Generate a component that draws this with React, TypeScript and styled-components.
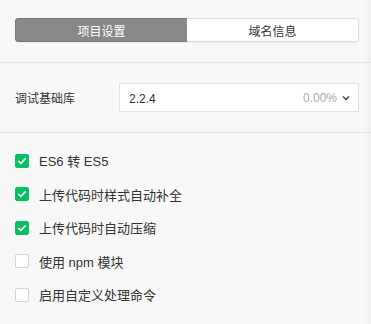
import React, { useState } from "react";
import styled, { createGlobalStyle } from "styled-components";

const Global = createGlobalStyle`
  html, body { margin: 0; padding: 0; background: #f8f8f8; }
  body { font-family: "Liberation Sans", "Noto Sans CJK SC", sans-serif; color: #333; }
`;

const Page = styled.div`
  width: 371px;
  min-height: 324px;
  background: #f8f8f8;
  box-shadow: inset -9px 0 8px -8px rgba(0, 0, 0, 0.06);
  box-sizing: border-box;
`;

const Section = styled.div<{ $pt: number; $pb: number }>`
  padding: ${(p) => p.$pt}px 12px ${(p) => p.$pb}px 15px;
  border-bottom: 1px solid #e6e6e6;
`;

const Tabs = styled.div`
  display: grid;
  grid-template-columns: 1fr 1fr;
  height: 24px;
  border-radius: 3px;
  overflow: hidden;
  box-shadow: 0 1px 1px rgba(0, 0, 0, 0.06);
`;

const Tab = styled.div<{ $active: boolean }>`
  display: flex;
  align-items: center;
  justify-content: center;
  font-size: 12px;
  box-sizing: border-box;
  background: ${(p) => (p.$active ? "#888888" : "#ffffff")};
  color: ${(p) => (p.$active ? "#ffffff" : "#333333")};
  border: 1px solid ${(p) => (p.$active ? "#7a7a7a" : "#dddddd")};
  border-radius: ${(p) => (p.$active ? "3px 0 0 3px" : "0 3px 3px 0")};
  ${(p) => (p.$active ? "border-right: none;" : "border-left: none;")}
`;

const Row = styled.div`
  display: flex;
  align-items: center;
`;

const Label = styled.div`
  width: 104px;
  font-size: 12px;
  color: #333;
`;

const Select = styled.div`
  flex: 1;
  height: 29px;
  box-sizing: border-box;
  background: #fff;
  border: 1px solid #e3e3e3;
  display: flex;
  align-items: center;
  padding: 0 8px 0 9px;
  font-size: 12px;
`;

const Value = styled.span`
  flex: 1;
  color: #333;
  padding-top: 2px;
`;

const Percent = styled.span`
  color: #aaa;
  margin-right: 5px;
`;

const List = styled.div`
  padding: 11px 15px 0 15px;
  display: flex;
  flex-direction: column;
`;

const Item = styled.label`
  display: flex;
  align-items: center;
  height: 33.5px;
  font-size: 13px;
  color: #333;
  cursor: pointer;
`;

const Box = styled.span<{ $checked: boolean }>`
  width: 14px;
  height: 14px;
  box-sizing: border-box;
  border-radius: 2px;
  margin-right: 10px;
  display: flex;
  align-items: center;
  justify-content: center;
  background: ${(p) => (p.$checked ? "#07c160" : "#fff")};
  border: 1px solid ${(p) => (p.$checked ? "#07c160" : "#d5d5d5")};
`;

const Chevron = () => (
  <svg width="8" height="6" viewBox="0 0 8 6">
    <path d="M1 1.5 L4 4.5 L7 1.5" fill="none" stroke="#444" strokeWidth="1.5" />
  </svg>
);

const Check = () => (
  <svg width="10" height="8" viewBox="0 0 10 8">
    <path d="M1.3 4 L3.9 6.4 L8.7 1.4" fill="none" stroke="#fff" strokeWidth="1.6" />
  </svg>
);

const items = [
  { label: "ES6 转 ES5", checked: true },
  { label: "上传代码时样式自动补全", checked: true },
  { label: "上传代码时自动压缩", checked: true },
  { label: "使用 npm 模块", checked: false },
  { label: "启用自定义处理命令", checked: false },
];

export default function App() {
  const [tab, setTab] = useState(0);
  const [state, setState] = useState(items.map((i) => i.checked));
  return (
    <Page>
      <Global />
      <Section $pt={18} $pb={20}>
        <Tabs>
          <Tab $active={tab === 0} onClick={() => setTab(0)}>项目设置</Tab>
          <Tab $active={tab === 1} onClick={() => setTab(1)}>域名信息</Tab>
        </Tabs>
      </Section>
      <Section $pt={20} $pb={20}>
        <Row>
          <Label>调试基础库</Label>
          <Select>
            <Value>2.2.4</Value>
            <Percent>0.00%</Percent>
            <Chevron />
          </Select>
        </Row>
      </Section>
      <List>
        {items.map((it, i) => (
          <Item key={it.label} onClick={() => setState((s) => s.map((v, j) => (j === i ? !v : v)))}>
            <Box $checked={state[i]}>{state[i] && <Check />}</Box>
            {it.label}
          </Item>
        ))}
      </List>
    </Page>
  );
}
